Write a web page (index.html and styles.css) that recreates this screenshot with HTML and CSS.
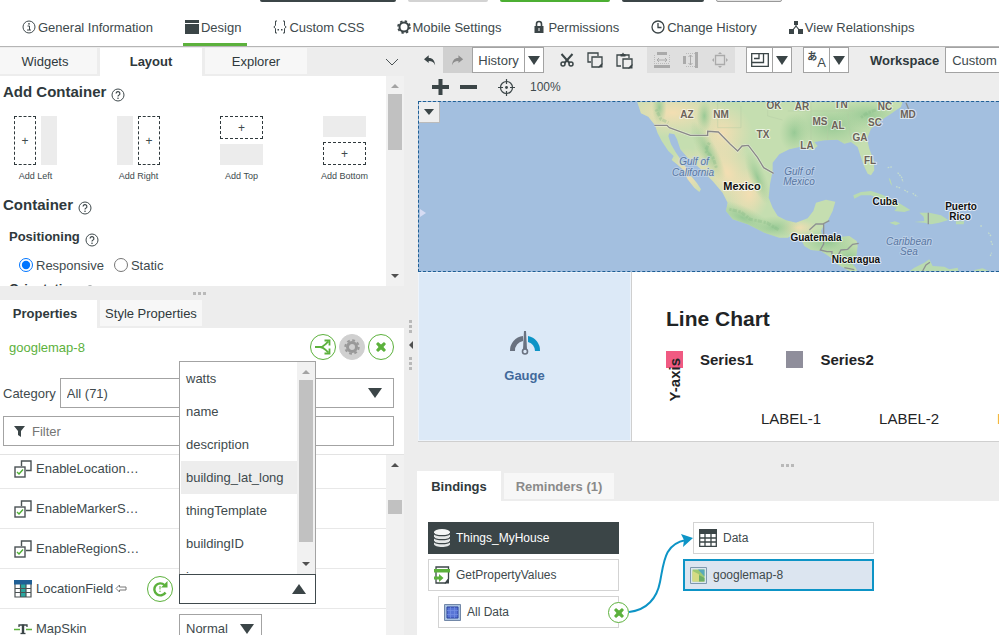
FILE: index.html
```html
<!DOCTYPE html>
<html lang="en">
<head>
    <meta charset="UTF-8">
    <title>Mashup Builder</title>
    <link rel="stylesheet" href="styles.css">
</head>
<body>
    <!-- shared icons -->
    <svg class="icon-defs" aria-hidden="true">
        <symbol id="icon-help" viewBox="0 0 14 14">
            <circle cx="7" cy="7" r="6" fill="none" stroke="#404a4d"/>
            <path d="M5.1 5.6a1.9 1.9 0 1 1 2.7 1.700c-.6.3-.8.6-.8 1.300" fill="none" stroke="#404a4d" stroke-width="1.200"/>
            <circle cx="7" cy="10.300" r=".8" fill="#404a4d"/>
        </symbol>
        <symbol id="icon-boolean" viewBox="0 0 18 18">
            <path d="M7.500 6V1h9.500v9.500H12" fill="none" stroke="#4a5254" stroke-width="1.400"/>
            <rect x="1" y="7" width="10" height="10" fill="#fff" stroke="#4a5254" stroke-width="1.400"/>
            <path d="M3 12l2 2 4-4.500" fill="none" stroke="#4caf32" stroke-width="1.400"/>
        </symbol>
        <symbol id="icon-cross" viewBox="0 0 12 12">
            <path d="M1 3l2-2 3 2.500L9 1l2 2-2.500 3L11 9l-2 2-3-2.500L3 11 1 9l2.500-3z" fill="#5cb13c"/>
        </symbol>
    </svg>

    <header>
        <div class="entity-actions">
            <button class="dark" aria-label="View mashup"></button>
            <button class="muted" aria-label="Save"></button>
            <button class="green" aria-label="Save and close"></button>
            <button class="dark" aria-label="Cancel"></button>
            <button class="outline" aria-label="More"></button>
        </div>
        <nav class="entity-nav">
            <a href="#">
                <svg width="14" height="14" viewBox="0 0 14 14"><circle cx="7" cy="7" r="6" fill="none" stroke="#404a4d"/><path d="M5.500 6h2v4M5 10h4" fill="none" stroke="#404a4d"/><circle cx="7" cy="3.800" r=".9" fill="#404a4d"/></svg>
                General Information
            </a>
            <a href="#" class="active">
                <svg width="14" height="14" viewBox="0 0 14 14"><path d="M0 0h14v3H0zM0 4h14v10H0z" fill="#3b4547"/></svg>
                Design
            </a>
            <a href="#">
                <svg width="14" height="14" viewBox="0 0 14 14"><path d="M4 1H2.500v4.500L.8 7l1.700 1.500V13H4M10 1h1.500v4.500L13.200 7l-1.700 1.500V13H10" fill="none" stroke="#404a4d"/><path d="M4.500 9h1.500v1.500H4.500zM8 9h1.500v1.500H8z" fill="#404a4d"/></svg>
                Custom CSS
            </a>
            <a href="#">
                <svg width="14" height="14" viewBox="0 0 14 14"><circle cx="7" cy="7" r="4.500" fill="none" stroke="#3b4547" stroke-width="2"/><circle cx="7" cy="7" r="6" fill="none" stroke="#3b4547" stroke-width="1.600" stroke-dasharray="2.400 2.312"/></svg>
                Mobile Settings
            </a>
            <a href="#">
                <svg width="13" height="14" viewBox="0 0 13 14"><path d="M3.500 7V4a2.500 2.500 0 0 1 5 0v3" fill="none" stroke="#3b4547" stroke-width="1.600"/><rect x="1.500" y="6" width="9" height="7" fill="#3b4547"/><path d="M6 8v3" stroke="#fff"/></svg>
                Permissions
            </a>
            <a href="#">
                <svg width="14" height="14" viewBox="0 0 14 14"><circle cx="7" cy="7" r="6" fill="none" stroke="#3b4547" stroke-width="1.300"/><path d="M7 3v4.500h3.500" fill="none" stroke="#3b4547" stroke-width="1.300"/></svg>
                Change History
            </a>
            <a href="#">
                <svg width="14" height="14" viewBox="0 0 14 14"><path d="M7 3v3L3 11M7 6l4 5" fill="none" stroke="#3b4547" stroke-width="1.200"/><path d="M5 1h4v4H5zM0 9h5v5H0zM9 9h5v5H9z" fill="#3b4547"/></svg>
                View Relationships
            </a>
        </nav>
    </header>

    <div class="builder">
        <aside class="side">
            <div class="tabs">
                <button>Widgets</button>
                <button class="active">Layout</button>
                <button>Explorer</button>
                <button class="collapse" aria-label="Collapse">
                    <svg width="14" height="8" viewBox="0 0 14 8"><path d="M1 1l6 6 6-6" fill="none" stroke="#4a5254"/></svg>
                </button>
            </div>
            <div class="layout-panel">
                <div class="layout-content">
                    <h3>Add Container <svg class="help"><use href="#icon-help"/></svg></h3>
                    <div class="add-tiles">
                        <button class="tile">
                            <span class="shape"><i class="slot tall">+</i><i class="block"></i></span>
                            <span>Add Left</span>
                        </button>
                        <button class="tile">
                            <span class="shape"><i class="block"></i><i class="slot tall">+</i></span>
                            <span>Add Right</span>
                        </button>
                        <button class="tile">
                            <span class="shape stacked"><i class="slot">+</i><i class="block"></i></span>
                            <span>Add Top</span>
                        </button>
                        <button class="tile">
                            <span class="shape stacked"><i class="block"></i><i class="slot">+</i></span>
                            <span>Add Bottom</span>
                        </button>
                    </div>
                    <h3>Container <svg class="help"><use href="#icon-help"/></svg></h3>
                    <h4>Positioning <svg class="help"><use href="#icon-help"/></svg></h4>
                    <div class="radios">
                        <label><input type="radio" name="positioning" checked>Responsive</label>
                        <label><input type="radio" name="positioning">Static</label>
                    </div>
                    <h4>Orientation <svg class="help"><use href="#icon-help"/></svg></h4>
                </div>
                <div class="scrollbar layout-scroll">
                    <b class="up off"></b><i></i><b class="down"></b>
                </div>
            </div>

            <div class="grip"></div>

            <div class="tabs property-tabs">
                <button class="active">Properties</button>
                <button>Style Properties</button>
            </div>
            <section class="properties">
                <div class="widget-row">
                    <span class="widget-name">googlemap-8</span>
                    <button class="round" aria-label="Bindings">
                        <svg width="16" height="16" viewBox="0 0 16 16"><path d="M0 8h5c4 0 5-3 8.500-5.500M5 8c4 0 5 3 8.500 5.500" fill="none" stroke="#5cb13c" stroke-width="1.800"/><path d="M9.500 1.500h5v5M9.500 14.500h5v-5" fill="none" stroke="#5cb13c" stroke-width="1.800"/></svg>
                    </button>
                    <button class="round disabled" aria-label="Configure" disabled>
                        <svg width="16" height="16" viewBox="0 0 16 16"><circle cx="8" cy="8" r="4.500" fill="none" stroke="#999" stroke-width="3"/><circle cx="8" cy="8" r="6.700" fill="none" stroke="#999" stroke-width="2" stroke-dasharray="2.800 2.462"/></svg>
                    </button>
                    <button class="round" aria-label="Delete">
                        <svg width="12" height="12"><use href="#icon-cross"/></svg>
                    </button>
                </div>
                <div class="category-row">
                    <label for="category">Category</label>
                    <span class="select wide"><select id="category"><option>All (71)</option></select></span>
                </div>
                <div class="filter">
                    <svg width="11" height="11" viewBox="0 0 11 11"><path d="M0 0h11L7 5v6L4 9V5z" fill="#3b4547"/></svg>
                    <input type="text" placeholder="Filter" aria-label="Filter">
                </div>
                <div class="property-panel">
                    <div class="property-list">
                        <div class="property"><svg class="type"><use href="#icon-boolean"/></svg><span>EnableLocation…</span></div>
                        <div class="property"><svg class="type"><use href="#icon-boolean"/></svg><span>EnableMarkerS…</span></div>
                        <div class="property"><svg class="type"><use href="#icon-boolean"/></svg><span>EnableRegionS…</span></div>
                        <div class="property">
                            <svg class="type" viewBox="0 0 18 18"><path d="M1 4h16v13H1z" fill="#fff"/><path d="M7 4h5v13H7z" fill="#2aa7a0"/><path d="M1 4v13h16V4M1 8.500h16M1 12.500h16M6.500 4v13M12 4v13" fill="none" stroke="#4a5254" stroke-width="1.200"/><path d="M0 0h18v4.500H0z" fill="#1f5f95"/></svg>
                            <label for="location-field">LocationField</label>
                            <svg class="bound" width="12" height="9" viewBox="0 0 12 9"><path d="M1 4.500L4.500 1v2H11v3H4.500v2z" fill="none" stroke="#777"/></svg>
                            <button class="round sync" aria-label="Refresh binding">
                                <svg width="16" height="16" viewBox="0 0 16 16"><path d="M13.500 11.500A6 6 0 1 1 12.500 4" fill="none" stroke="#5cb13c" stroke-width="2.400"/><path d="M9 6.500h6.500V0z" fill="#5cb13c"/><path d="M8 5v3.500M8 9.700v1.300" stroke="#5cb13c"/></svg>
                            </button>
                            <span class="select open"><select id="location-field"><option></option></select></span>
                        </div>
                        <div class="property">
                            <svg class="type" viewBox="0 0 18 18"><path d="M0 9.500h6M12 9.500h6" stroke="#5cb13c" stroke-width="1.500"/><path d="M5 7V5h8v2" fill="none" stroke="#3b4547" stroke-width="1.300"/><path d="M9 4.500v9" stroke="#3b4547" stroke-width="2.400"/><path d="M6.500 13.500h5" stroke="#3b4547" stroke-width="1.300"/></svg>
                            <label for="map-skin">MapSkin</label>
                            <span class="select small"><select id="map-skin"><option>Normal</option></select></span>
                        </div>
                    </div>
                    <div class="scrollbar property-scroll">
                        <b class="up"></b><i></i>
                    </div>
                </div>
                <div class="options">
                    <ul role="listbox" aria-label="LocationField options">
                        <li role="option">watts</li>
                        <li role="option">name</li>
                        <li role="option">description</li>
                        <li role="option" class="hover" aria-selected="true">building_lat_long</li>
                        <li role="option">thingTemplate</li>
                        <li role="option">buildingID</li>
                        <li role="option">image</li>
                    </ul>
                    <div class="scrollbar option-scroll">
                        <b class="up off"></b><i></i><b class="down"></b>
                    </div>
                </div>
            </section>
        </aside>

        <div class="splitter">
            <span class="dots"></span>
            <span class="arrow"></span>
            <span class="dots"></span>
        </div>

        <main>
            <div class="toolbar">
                <button class="tool undo" aria-label="Undo"><svg width="12" height="11" viewBox="0 0 14 12"><path d="M0 4.500L5.500 0v3c5 0 7 3 7.500 8.500C11.500 8 9.500 6.500 5.500 6.500V9z" fill="#3b4547"/></svg></button>
                <button class="tool redo" aria-label="Redo" disabled><svg width="12" height="11" viewBox="0 0 14 12"><path d="M13 4.500L7.500 0v3C2.500 3 .5 6 0 11.500 1.500 8 3.500 6.500 7.500 6.500V9z" fill="#8c8c8c"/></svg></button>
                <span class="split-button"><button>History</button><button class="drop" aria-label="Open history"></button></span>
                <div class="edit-tools">
                    <button class="tool" aria-label="Cut"><svg width="14" height="14" viewBox="0 0 14 14"><path d="M1.500 1l8 9M12.500 1l-8 9" stroke="#3b4547" stroke-width="2" fill="none"/><circle cx="3" cy="11" r="2" fill="none" stroke="#3b4547" stroke-width="1.500"/><circle cx="11" cy="11" r="2" fill="none" stroke="#3b4547" stroke-width="1.500"/></svg></button>
                    <button class="tool" aria-label="Copy"><svg width="16" height="16" viewBox="0 0 16 16"><path d="M4 10H1V1h10v3" fill="none" stroke="#3b4547" stroke-width="1.300"/><path d="M5 5h10v7l-3 3H5z" fill="#eee" stroke="#3b4547" stroke-width="1.300"/><path d="M15.500 11v4.500H11z" fill="#3b4547"/></svg></button>
                    <button class="tool" aria-label="Paste"><svg width="17" height="17" viewBox="0 0 17 17"><path d="M5 14H1V3h12v3" fill="none" stroke="#3b4547" stroke-width="1.300"/><path d="M4.500 4.500V2H6l1-1.500L8 2h1.500v2.500z" fill="#3b4547"/><path d="M7 7h9v6l-3 3H7z" fill="#eee" stroke="#3b4547" stroke-width="1.300"/><path d="M16.500 12v4.500H12z" fill="#3b4547"/></svg></button>
                </div>
                <div class="align-tools">
                    <button class="tool" aria-label="Match width" disabled><svg width="16" height="16" viewBox="0 0 16 16"><path d="M3 0h10v3H3zM0 13h16v3H0z" fill="#aaa"/><path d="M3 8h10M5 6L3 8l2 2M11 6l2 2-2 2" fill="none" stroke="#aaa"/><path d="M.5 3v8M15.500 3v8M0 11.500h16" stroke="#bbb" stroke-dasharray="1 1"/></svg></button>
                    <button class="tool" aria-label="Match height" disabled><svg width="16" height="16" viewBox="0 0 16 16"><path d="M0 4h3v8H0zM12 0h3v16h-3z" fill="#aaa"/><path d="M7.500 3v10M5.500 5l2-2 2 2M5.500 11l2 2 2-2" fill="none" stroke="#aaa"/><path d="M3 1.500h9M3 14.500h9" stroke="#bbb" stroke-dasharray="1 1"/></svg></button>
                    <button class="tool" aria-label="Match size" disabled><svg width="16" height="16" viewBox="0 0 16 16"><path d="M3.500 3.500h9v9h-9z" fill="none" stroke="#aaa" stroke-width="1.300"/><path d="M8 0l2 2H6zM8 16l2-2H6zM0 8l2-2v4zM16 8l-2-2v4z" fill="#aaa"/></svg></button>
                </div>
                <span class="split-button icons first"><button aria-label="Layout mode"><svg width="18" height="14" viewBox="0 0 18 14"><path d="M.7.7h16.600v12.600H.7zM.7 9.500h11.800V.7M3 5.500h5V.7" fill="none" stroke="#3b4547" stroke-width="1.300"/></svg></button><button class="drop" aria-label="Layout options"></button></span>
                <span class="split-button icons"><button class="lang" aria-label="Language"><span>あ</span><span>A</span></button><button class="drop" aria-label="Language options"></button></span>
                <label for="workspace">Workspace</label>
                <span class="select workspace"><select id="workspace"><option>Custom</option></select></span>
            </div>
            <div class="zoombar">
                <button class="tool" aria-label="Zoom in"><svg width="17" height="16" viewBox="0 0 17 16"><path d="M8.500 0v16M0 8h17" stroke="#3b4547" stroke-width="4"/></svg></button>
                <button class="tool" aria-label="Zoom out"><svg width="17" height="16" viewBox="0 0 17 16"><path d="M0 8h17" stroke="#3b4547" stroke-width="4"/></svg></button>
                <button class="tool center-view" aria-label="Center"><svg width="17" height="17" viewBox="0 0 17 17"><circle cx="8.500" cy="8.500" r="6" fill="none" stroke="#3b4547" stroke-width="1.200"/><path d="M8.500 0v5M8.500 12v5M0 8.500h5M12 8.500h5" stroke="#3b4547" stroke-width="1.200"/><circle cx="8.500" cy="8.500" r="1.400" fill="#3b4547"/></svg></button>
                <span>100%</span>
            </div>

            <div class="canvas">
                <div class="map">
                    <svg viewBox="0 0 580 169" preserveAspectRatio="xMinYMin slice">
                        <defs>
                            <radialGradient id="forest"><stop offset="0" stop-color="#92c792" stop-opacity=".9"/><stop offset="1" stop-color="#a5d09c" stop-opacity="0"/></radialGradient>
                            <radialGradient id="desert"><stop offset="0" stop-color="#f3deb2"/><stop offset="1" stop-color="#eeddb4" stop-opacity="0"/></radialGradient>
                            <clipPath id="mainland"><path id="coast" d="M-14 10L0 52l22 10 20 26 8 24 12 23 20 30 16 15-6 12 16 13 17 15 15 30 20 25 15 13 5-8-12-18-18-22-10-18-18-27-17-25-15-25-8-25 3-8 15 3 8 15 10 30 22 25 35 30 40 40 30 35 15 30-5 25 20 25 45 15 50 25 45 15 25 0 20-10 20 15 10 20 20 12 30 3 30 20 20 20 20 12 45 24-10-24-10-12 10-20 5-35-3-15-22-15-50 5-30-2-5-18 10-20 10-10 15-30 8-28-28-6-30 9-8 25-17 22-35 13-30-7-25-13-15-25-12-30 4-40 8-40v-25l20-25 30-15 30-7 20 7 20 3 15-13-10-12 30-5 40-2 20 12 20-5 20 15 8 25 10 30 12 25 10 5 10-15-2-30-13-35-7-30 12-30 30-25 30-20 15-10 15-10 10-32z"/></clipPath>
                        </defs>
                        <g transform="translate(222 -6) scale(.3333)">
                            <use href="#coast" fill="#c5deb0"/>
                            <g clip-path="url(#mainland)">
                                <ellipse cx="95" cy="50" rx="170" ry="75" fill="url(#desert)"/>
                                <ellipse cx="245" cy="110" rx="90" ry="90" fill="url(#desert)"/>
                                <ellipse cx="140" cy="235" rx="75" ry="80" fill="url(#desert)"/>
                                <ellipse cx="260" cy="230" rx="85" ry="150" transform="rotate(-30 260 230)" fill="url(#desert)"/>
                                <ellipse cx="325" cy="295" rx="60" ry="80" fill="url(#desert)"/>
                                <ellipse cx="470" cy="395" rx="60" ry="25" fill="url(#desert)"/>
                                <ellipse cx="200" cy="165" rx="28" ry="100" transform="rotate(-28 200 165)" fill="url(#forest)"/>
                                <ellipse cx="55" cy="35" rx="22" ry="50" fill="url(#forest)"/>
                                <ellipse cx="190" cy="60" rx="24" ry="50" fill="url(#forest)"/>
                                <ellipse cx="305" cy="365" rx="100" ry="35" transform="rotate(25 305 365)" fill="url(#forest)"/>
                                <ellipse cx="350" cy="245" rx="25" ry="85" transform="rotate(-22 350 245)" fill="url(#forest)"/>
                                <ellipse cx="400" cy="395" rx="80" ry="35" fill="url(#forest)"/>
                                <ellipse cx="460" cy="110" rx="45" ry="60" fill="url(#forest)"/>
                                <ellipse cx="575" cy="90" rx="130" ry="75" fill="url(#forest)"/>
                                <ellipse cx="680" cy="55" rx="100" ry="45" fill="url(#forest)"/>
                                <ellipse cx="560" cy="440" rx="90" ry="45" fill="url(#forest)"/>
                                <ellipse cx="625" cy="485" rx="60" ry="45" fill="url(#forest)"/>
                                <path d="M265 340l35 8 28 22 50 10 35 22M205 140l-12 25 23 20 10 30M660 65l20-15 30-10M45 40l15 30 22 10" fill="none" stroke="#86bb86" stroke-width="9" stroke-dasharray="7 3 13 5" opacity=".35"/>
                                <path d="M300 30v65h-70V20M380 20v40l45 12M510 20v120M560 60v80M620 50l10 85M440 45h200" fill="none" stroke="#b4c9a3" stroke-width="2" opacity=".6"/>
                            </g>
                            <path d="M637 298l23-10 30-3 30 10 30 13 30 17 28 17-18 6-30-3 8-10-28-10-25-15-25-12-30 0-20 10zM820 378l30-3-2-13-13-12h30l35 8 22 14-27 8-25 5-20-5zM745 380l17-4 16 6-13 6zM945 376h25l-2 9h-23zM800 530l20-15 30-15 15-10 10 20 35 2 15 8 25-5 5 20zM743 245l5 5 6 20-6-8zM1000 522l25-5 30 13h-55z" fill="#b9dab0"/>
                            <path d="M740 215l15-3M770 230l12 14 4 14M765 272l14 4M790 282l14 8M815 292l14 10M1018 390h5M1042 410l8 10M1050 435l6 15M1048 480l4-10" fill="none" stroke="#c4dccb" stroke-width="4" stroke-dasharray="5 3"/>
                            <path d="M40 88h38l7 7 63 23h52v-12l32 2 36 37 22 20 13-15 19-2 28 37 18 30 30 17" fill="none" stroke="#fff" stroke-width="8" opacity=".4"/>
                            <path d="M40 88h38l7 7 63 23h52v-12l32 2 36 37 22 20 13-15 19-2 28 37 18 30 30 17" fill="none" stroke="#8a8989" stroke-width="4"/>
                            <path d="M505 402l20-18h20l20-10M548 384v60l-10 18 20 5h15v15M590 480l10-18 20-2 15-15 18-3M610 515l30 6M862 350v35M845 525l10-18 12-8M795 20l8 20" fill="none" stroke="#8e9292" stroke-width="4"/>
                        </g>
                        <g class="state">
                            <text x="268" y="16">AZ</text><text x="302" y="16">NM</text><text x="344" y="36">TX</text>
                            <text x="355" y="7">OK</text><text x="383" y="8">AR</text><text x="422" y="6">TN</text>
                            <text x="466" y="8">NC</text><text x="489" y="16">MD</text><text x="401" y="23">MS</text>
                            <text x="419" y="27">AL</text><text x="456" y="24">SC</text><text x="441" y="39">GA</text>
                            <text x="388" y="47">LA</text><text x="451" y="62">FL</text>
                        </g>
                        <g class="water">
                            <text x="275" y="63">Gulf of</text><text x="274" y="74">California</text>
                            <text x="380" y="73">Gulf of</text><text x="380" y="83">Mexico</text>
                            <text x="490" y="143">Caribbean</text><text x="490" y="153">Sea</text>
                        </g>
                        <g class="country">
                            <text class="large" x="323" y="88">Mexico</text><text x="466" y="103">Cuba</text>
                            <text x="542" y="108">Puerto</text><text x="541" y="118">Rico</text>
                            <text x="397" y="139">Guatemala</text><text x="437" y="161">Nicaragua</text>
                        </g>
                        <path d="M1 107l6 4-6 4z" fill="#d6dcf3"/>
                    </svg>
                    <button class="map-menu" aria-label="Widget menu"></button>
                </div>
                <div class="widgets-row">
                    <div class="gauge">
                        <svg width="32" height="24" viewBox="0 0 32 24"><path d="M1 20A14.500 14.500 0 0 1 14 5v5A9.500 9.500 0 0 0 6 20z" fill="#6a7280"/><path d="M19 5a14.500 14.500 0 0 1 12 15h-5a10 10 0 0 0-7-9z" fill="#0d94c6"/><path d="M15 0h2l1 18h-4z" fill="#6a7280"/><circle cx="16" cy="20.500" r="2.500" fill="#dce9f7" stroke="#6a7280" stroke-width="1.600"/></svg>
                        <span>Gauge</span>
                    </div>
                    <div class="chart">
                        <h2>Line Chart</h2>
                        <div class="legend">
                            <i class="pink"></i><span>Series1</span>
                            <i class="grey"></i><span>Series2</span>
                        </div>
                        <span class="y-axis">Y-axis</span>
                        <div class="x-labels"><span>LABEL-1</span><span>LABEL-2</span><span class="last">LABEL-3</span></div>
                    </div>
                </div>
            </div>

            <div class="grip bindings-grip"></div>

            <div class="tabs binding-tabs">
                <button class="active">Bindings</button>
                <button>Reminders (1)</button>
            </div>
            <section class="bindings">
                <div class="nodes">
                    <div class="node source">
                        <svg width="16" height="18" viewBox="0 0 16 18"><path d="M0 3v12c0 4 16 4 16 0V3z" fill="#e4e7e7"/><ellipse cx="8" cy="3" rx="8" ry="3" fill="#f4f6f6"/><path d="M0 4c0 3.500 16 3.500 16 0M0 8c0 3.500 16 3.500 16 0M0 12c0 3.500 16 3.500 16 0" fill="none" stroke="#3b4547" stroke-width="1.100"/></svg>
                        Things_MyHouse
                    </div>
                    <div class="node">
                        <svg width="16" height="18" viewBox="0 0 16 18"><path d="M2 1h12.500v12l-3 4H2z" fill="#fff" stroke="#3b4547" stroke-width="1.300"/><path d="M15 12v5.500h-4.500z" fill="#3b4547"/><path d="M0 3h16v3.500H0z" fill="#5cb13c"/><path d="M0 10.500h5V8l4.500 4L5 16v-2.500H0z" fill="#5cb13c"/></svg>
                        GetPropertyValues
                    </div>
                    <div class="node child">
                        <svg width="17" height="17" viewBox="0 0 17 17"><path d="M.5.5h16v16H.5z" fill="#a9c2e0" stroke="#7288a8"/><path d="M3 3h11v11H3z" fill="#5875d6" stroke="#2a439f"/><path d="M3 6.500h11M3 10.500h11M6.500 3v11M10.500 3v11" stroke="#7690e4" stroke-width=".7"/></svg>
                        All Data
                        <button class="round unbind" aria-label="Remove binding"><svg width="12" height="12"><use href="#icon-cross"/></svg></button>
                    </div>
                </div>
                <div class="nodes targets">
                    <svg class="link" width="66" height="82" viewBox="0 0 66 82"><path d="M0 79c18-2 28-14 31-30 4-20 4-38 26-42" fill="none" stroke="#0d94c6" stroke-width="2"/><path d="M64 5L52 1l3 6-1 7z" fill="#0d94c6"/></svg>
                    <div class="node child">
                        <svg width="18" height="18" viewBox="0 0 18 18"><path d="M.7.7h16.600v16.600H.7zM1 9h16M1 13h16M6 4v13M12 4v13" fill="none" stroke="#3b4547" stroke-width="1.300"/><path d="M0 0h18v5H0z" fill="#3b4547"/></svg>
                        Data
                    </div>
                    <div class="node selected">
                        <svg width="17" height="17" viewBox="0 0 17 17"><path d="M.5.5h16v16H.5z" fill="#dbe7ef" stroke="#7e98ae"/><path d="M2.500 2.500h12v12h-12z" fill="#9ec873"/><path d="M8 2.500h6.500v7z" fill="#58a9ba"/><path d="M2.500 4l6 3 5 7.500h-11z" fill="#d6db83"/><path d="M9 8l5.500 3v3.500H9z" fill="#6eae67"/></svg>
                        googlemap-8
                    </div>
                </div>
            </section>
        </main>
    </div>
</body>
</html>
```

FILE: styles.css
```css
* {
    box-sizing: border-box;
}
body {
    margin: 0;
    height: 100vh;
    overflow: hidden;
    display: flex;
    flex-direction: column;
    background-color: #ededed;
    color: #404a4d;
    font-family: "Liberation Sans", Arial, sans-serif;
    font-size: 13px;
}
button,
input,
select {
    font: inherit;
    color: inherit;
}
button {
    padding: 0;
    border: 0;
    background: none;
}
svg {
    display: block;
    flex-shrink: 0;
}
h2, h3, h4, ul {
    margin: 0;
    padding: 0;
}
.icon-defs {
    display: none;
}

/* header */
header {
    flex-shrink: 0;
    background-color: #fff;
    border-bottom: 1px solid #b5b5b5;
}
.entity-actions {
    display: flex;
    align-items: flex-end;
    gap: 12px;
    height: 2px;
    padding-left: 260px;
}
.entity-actions button {
    flex-shrink: 0;
    height: 28px;
    width: 82px;
    border-radius: 2px;
}
.entity-actions .dark {
    background-color: #3b4547;
}
.entity-actions .dark:first-child {
    width: 136px;
}
.entity-actions .muted {
    width: 80px;
    background-color: #d3d3d3;
}
.entity-actions .green {
    width: 110px;
    background-color: #4caf32;
}
.entity-actions .outline {
    width: 66px;
    border: 1px solid #999;
    background-color: #e5e5e5;
}
.entity-nav {
    display: flex;
    gap: 24px;
    height: 44px;
    padding-left: 20px;
}
.entity-nav a {
    display: flex;
    align-items: center;
    gap: 2px;
    padding: 9px 6px 0 2px;
    border-bottom: 3px solid transparent;
    color: inherit;
    text-decoration: none;
    white-space: nowrap;
}
.entity-nav a.active {
    border-bottom-color: #5cb13c;
}

.builder {
    flex: 1;
    display: flex;
    min-height: 0;
}
.side {
    width: 404px;
    flex-shrink: 0;
    display: flex;
    flex-direction: column;
}

/* tabs */
.tabs {
    display: flex;
    align-items: flex-end;
    gap: 3px;
    height: 29px;
    flex-shrink: 0;
}
.tabs button {
    width: 102px;
    height: 26px;
    margin-bottom: 2px;
    background-color: #f7f7f7;
    color: #2f393c;
}
.tabs button:first-child {
    width: 97px;
    padding-right: 7px;
}
.tabs button.active {
    height: 28px;
    margin-bottom: 0;
    padding-bottom: 2px;
    background-color: #fff;
    font-weight: bold;
}
.tabs .collapse {
    display: flex;
    align-items: center;
    width: 14px;
    margin: 0 5px 1px auto;
    background: none;
}

/* scrollbars */
.scrollbar {
    display: flex;
    flex-direction: column;
    align-items: center;
    width: 18px;
    flex-shrink: 0;
    background-color: #f1f1f1;
}
.scrollbar i {
    width: 14px;
    background-color: #c1c1c1;
}
.scrollbar b {
    margin: 8px 0 6px;
    border: 4px solid transparent;
    border-top-width: 0;
    border-bottom-color: #505050;
}
.scrollbar b.down {
    margin: auto 0 8px;
    border-width: 4px 4px 0;
    border-top-color: #505050;
}
.scrollbar b.off {
    border-bottom-color: #a3a3a3;
}
.layout-scroll i {
    height: 56px;
}
.property-scroll i {
    height: 14px;
    margin-top: 27px;
}
.option-scroll i {
    height: 162px;
}

/* layout tab */
.layout-panel {
    display: flex;
    height: 210px;
    flex-shrink: 0;
    background-color: #fff;
}
.layout-content {
    flex: 1;
    overflow: hidden;
    padding: 6px 3px 0;
}
h3,
h4 {
    display: flex;
    align-items: center;
    gap: 5px;
    height: 20px;
    line-height: 20px;
    color: #2f393c;
}
h3 {
    font-size: 15px;
}
h4 {
    font-size: 13px;
    padding-left: 6px;
    margin-top: 12px;
}
.help {
    width: 14px;
    height: 14px;
    margin-top: 6px;
}
.add-tiles {
    display: flex;
    gap: 50px;
    padding: 14px 0 13px 6px;
}
.tile {
    width: 53px;
    font-size: 9px;
    line-height: 12px;
    white-space: nowrap;
}
.shape {
    display: flex;
    gap: 5px;
    width: 43px;
    height: 49px;
    margin: 0 auto 5px;
}
.shape.stacked {
    flex-direction: column;
}
.block {
    flex: 1;
    background-color: #ececec;
}
.slot {
    display: flex;
    align-items: center;
    justify-content: center;
    height: 23px;
    border: 1px dashed #2f393c;
    font-size: 12px;
    font-style: normal;
}
.slot.tall {
    width: 22px;
    height: 49px;
}
.radios {
    display: flex;
    gap: 10px;
    margin-top: 8px;
    padding-left: 16px;
}
.radios label {
    display: flex;
    align-items: center;
    gap: 3px;
    height: 20px;
}
.radios input {
    width: 14px;
    height: 14px;
    margin: 0;
    accent-color: #0075ff;
}
.radios + h4 {
    margin-top: 4px;
}

.grip {
    display: flex;
    justify-content: center;
    height: 13px;
    padding-right: 6px;
    flex-shrink: 0;
}
.grip::after {
    content: "";
    width: 13px;
    height: 3px;
    margin-top: 6px;
    background: repeating-linear-gradient(90deg, #b9b9b9 0 3px, transparent 3px 5px);
}

/* properties */
.property-tabs button {
    width: 102px;
}
.properties {
    position: relative;
    flex: 1;
    min-height: 0;
    display: flex;
    flex-direction: column;
    padding-top: 6px;
    background-color: #fff;
}
.widget-row {
    display: flex;
    align-items: center;
    gap: 3px;
    padding: 0 10px 0 9px;
}
.widget-name {
    margin-right: auto;
    color: #5cb13c;
}
.round {
    display: flex;
    align-items: center;
    justify-content: center;
    width: 26px;
    height: 26px;
    flex-shrink: 0;
    border: 1px solid #5cb13c;
    border-radius: 50%;
    background-color: #fff;
}
.round.disabled {
    border-color: #d0d0d0;
    background-color: #d0d0d0;
}
.category-row {
    display: flex;
    align-items: center;
    gap: 4px;
    margin-top: 18px;
    padding: 0 10px 0 3px;
}
.select {
    position: relative;
    display: block;
}
.select select {
    appearance: none;
    display: block;
    width: 100%;
    height: 30px;
    padding: 0 6px;
    border: 1px solid #a3a3a3;
    border-radius: 0;
    background-color: #fff;
}
.select::after {
    content: "";
    position: absolute;
    right: 8px;
    top: 10px;
    border: 7px solid transparent;
    border-top: 10px solid #3b4547;
    border-bottom: 0;
    pointer-events: none;
}
.select.wide {
    flex: 1;
}
.select.wide::after {
    right: 12px;
}
.select.open {
    width: 137px;
}
.select.open select {
    border-color: #404a4d;
}
.select.open::after {
    right: 10px;
    border-top: 0;
    border-bottom: 10px solid #3b4547;
}
.select.small {
    width: 83px;
}
.filter {
    display: flex;
    align-items: center;
    gap: 7px;
    height: 30px;
    margin: 8px 10px 8px 3px;
    padding: 0 10px;
    border: 1px solid #a3a3a3;
}
.filter input {
    flex: 1;
    border: 0;
    padding: 0;
    outline: 0;
}
.filter input::placeholder {
    color: #757575;
}
.property-panel {
    flex: 1;
    min-height: 0;
    display: flex;
    overflow: hidden;
    border-top: 1px solid #e3e3e3;
}
.property-list {
    flex: 1;
    margin-top: -6px;
}
.property {
    display: flex;
    align-items: center;
    height: 40px;
    padding-left: 14px;
    border-bottom: 1px solid #e8e8e8;
}
.property .type {
    width: 18px;
    height: 18px;
    margin-right: 4px;
}
.property .bound {
    margin-left: 2px;
}
.property .sync {
    margin: 0 6px 0 auto;
}
.property .select {
    margin-left: auto;
    margin-right: 124px;
}
.property .select.open {
    margin: 0 70px 0 0;
}
.options {
    position: absolute;
    left: 179px;
    top: 33px;
    width: 137px;
    height: 213px;
    display: flex;
    padding-left: 1px;
    border: 1px solid #a3a3a3;
    border-bottom: 0;
    background-color: #fff;
    overflow: hidden;
}
.options ul {
    flex: 1;
    list-style: none;
}
.options li {
    height: 33px;
    padding-left: 5px;
    line-height: 33px;
}
.options li.hover {
    background-color: #ededed;
}

/* splitter between side panel and canvas */
.splitter {
    display: flex;
    flex-direction: column;
    align-items: center;
    justify-content: center;
    gap: 8px;
    width: 13px;
    flex-shrink: 0;
    padding-top: 8px;
}
.splitter .dots {
    width: 3px;
    height: 13px;
    background: repeating-linear-gradient(#b9b9b9 0 3px, transparent 3px 5px);
}
.splitter .arrow {
    border: 4px solid transparent;
    border-left-width: 0;
    border-right-color: #505050;
}

/* canvas toolbar */
main {
    flex: 1;
    min-width: 0;
    display: flex;
    flex-direction: column;
}
.toolbar {
    display: flex;
    align-items: center;
    height: 26px;
    overflow: hidden;
    flex-shrink: 0;
}
.tool {
    display: flex;
    align-items: center;
    justify-content: center;
    height: 26px;
    flex-shrink: 0;
}
.undo {
    width: 26px;
}
.redo {
    width: 29px;
    background-color: #d0d0d0;
}
.split-button {
    display: flex;
    height: 26px;
    border: 1px solid #a3a3a3;
    background-color: #fff;
    flex-shrink: 0;
}
.split-button button {
    display: flex;
    align-items: center;
    justify-content: center;
    width: 51px;
}
.split-button .drop {
    width: 19px;
    border-left: 1px solid #a3a3a3;
}
.drop::after,
.map-menu::after {
    content: "";
    border: 6px solid transparent;
    border-top: 9px solid #3b4547;
    border-bottom: 0;
}
.edit-tools {
    display: flex;
    gap: 13px;
    margin: 0 14px 0 16px;
    flex-shrink: 0;
}
.align-tools {
    display: flex;
    gap: 13px;
    padding: 0 7px;
    background-color: #dfdfdf;
    flex-shrink: 0;
}
.icons {
    margin-left: 11px;
}
.icons button {
    width: 25px;
}
.lang span {
    font-size: 10px;
    font-weight: bold;
    font-family: "Liberation Sans", "Noto Sans CJK JP", sans-serif;
    line-height: 12px;
    margin-bottom: 6px;
}
.lang span + span {
    font-size: 13px;
    font-weight: normal;
    margin: 6px 0 0;
}
.toolbar label {
    margin: 0 6px 0 21px;
    font-weight: bold;
    color: #2f393c;
}
.select.workspace {
    width: 120px;
    flex-shrink: 0;
}
.workspace select {
    height: 26px;
}
.zoombar {
    display: flex;
    align-items: center;
    gap: 11px;
    height: 28px;
    padding-left: 15px;
    font-size: 12px;
    flex-shrink: 0;
}
.center-view {
    margin: 0 4px 0 10px;
}

/* mashup canvas */
.canvas {
    margin-left: 1px;
    border-bottom: 1px solid #cfcfcf;
    flex-shrink: 0;
}
.map {
    position: relative;
    height: 171px;
    border: 1px dashed #1f5f95;
    border-right: 0;
    background-color: #a3bfdf;
    overflow: hidden;
}
.map > svg {
    width: 100%;
    height: 100%;
}
.map text {
    text-anchor: middle;
    font-size: 10px;
    font-weight: bold;
    paint-order: stroke;
    stroke-width: 2px;
    stroke-linejoin: round;
}
.map .state text {
    fill: #6c6259;
    stroke: rgba(255, 255, 255, 0.6);
}
.map .water text {
    fill: #5877a3;
    font-weight: normal;
    font-style: italic;
    stroke: rgba(200, 216, 236, 0.6);
}
.map .country text {
    fill: #111;
    stroke: rgba(255, 255, 255, 0.7);
}
.map .country .large {
    font-size: 11px;
}
.map-menu {
    position: absolute;
    left: 0;
    top: 0;
    display: flex;
    align-items: center;
    justify-content: center;
    width: 21px;
    height: 21px;
    border-right: 1px solid #bbb;
    border-bottom: 1px solid #bbb;
    background-color: #eee;
}
.map-menu::after {
    border-width: 6px 5px 0;
}
.widgets-row {
    display: flex;
    height: 169px;
}
.gauge {
    display: flex;
    flex-direction: column;
    align-items: center;
    justify-content: center;
    gap: 13px;
    width: 213px;
    flex-shrink: 0;
    border: 1px solid #eef4fb;
    background-color: #dce9f7;
    color: #42699b;
    font-weight: bold;
}
.chart {
    position: relative;
    flex: 1;
    min-width: 0;
    overflow: hidden;
    padding: 34px 0 0 34px;
    border-left: 1px solid #cfcfcf;
    background-color: #fff;
    color: #1f2426;
    font-size: 15px;
}
.chart h2 {
    font-size: 21px;
    line-height: 26px;
}
.legend {
    display: flex;
    align-items: center;
    height: 18px;
    margin-top: 18px;
    font-weight: bold;
}
.legend i {
    width: 17px;
    height: 17px;
    margin-right: 17px;
}
.legend i + span + i {
    margin-left: 33px;
}
.legend .pink {
    background-color: #f05a82;
}
.legend .grey {
    background-color: #8f8e9b;
}
.y-axis {
    position: absolute;
    left: 34px;
    top: 86px;
    line-height: 18px;
    font-weight: bold;
    writing-mode: vertical-rl;
    transform: rotate(180deg);
}
.x-labels {
    display: flex;
    gap: 58px;
    margin-top: 41px;
    padding-left: 95px;
    line-height: 20px;
    white-space: nowrap;
}
.x-labels .last {
    color: #eda53c;
}

/* bindings */
.bindings-grip {
    height: 29px;
    padding: 16px 0 0 159px;
}
.binding-tabs {
    height: 30px;
}
.binding-tabs button {
    width: 110px;
    color: #8a8a8a;
    font-weight: bold;
}
.binding-tabs button.active {
    width: 84px;
    height: 30px;
    padding: 0;
    color: #2f393c;
}
.bindings {
    flex: 1;
    display: flex;
    align-items: flex-start;
    gap: 64px;
    padding: 21px 11px;
    background-color: #fff;
}
.nodes {
    position: relative;
    display: flex;
    flex-direction: column;
    gap: 5px;
    width: 191px;
}
.node {
    position: relative;
    display: flex;
    align-items: center;
    gap: 6px;
    height: 32px;
    padding-left: 5px;
    border: 1px solid #d3d3d3;
    background-color: #fff;
    font-size: 12px;
}
.node.child {
    margin-left: 10px;
}
.node.source {
    border-color: #3b4547;
    background-color: #3b4547;
    color: #fff;
}
.node.selected {
    border: 2px solid #0d94c6;
    background-color: #dce5f0;
}
.unbind {
    position: absolute;
    right: -11px;
    top: 5px;
    width: 21px;
    height: 21px;
}
.link {
    position: absolute;
    left: -54px;
    top: 11px;
}
```
